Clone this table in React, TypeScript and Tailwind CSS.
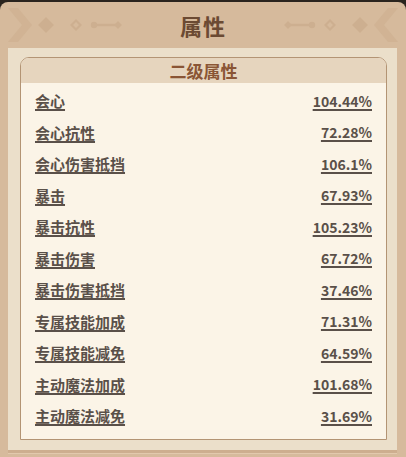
const rows: [string, string][] = [
  ['会心', '104.44%'],
  ['会心抗性', '72.28%'],
  ['会心伤害抵挡', '106.1%'],
  ['暴击', '67.93%'],
  ['暴击抗性', '105.23%'],
  ['暴击伤害', '67.72%'],
  ['暴击伤害抵挡', '37.46%'],
  ['专属技能加成', '71.31%'],
  ['专属技能减免', '64.59%'],
  ['主动魔法加成', '101.68%'],
  ['主动魔法减免', '31.69%'],
];

function Ornament({ flip = false }: { flip?: boolean }) {
  return (
    <svg
      width="124"
      height="46"
      viewBox="0 0 124 46"
      className={flip ? '-scale-x-100' : ''}
      fill="#cdaf90"
    >
      {/* big chevron */}
      <path d="M4 6 L14 6 L28 23 L14 40 L4 40 L18 23 Z" opacity="0.6" />
      {/* filled diamond */}
      <path d="M42 15 L50 23 L42 31 L34 23 Z" />
      {/* outlined diamond */}
      <path d="M72 17 L78 23 L72 29 L66 23 Z M72 20 L69 23 L72 26 L75 23 Z" fillRule="evenodd" />
      {/* line with knob */}
      <circle cx="90" cy="23" r="3.2" />
      <rect x="90" y="21.8" width="24" height="2.4" />
      <path d="M114 19 L118 23 L114 27 L110 23 Z" />
    </svg>
  );
}

export default function App() {
  return (
    <div
      className="w-[406px] h-[457px] bg-[#2a241e] overflow-hidden"
      style={{ fontFamily: '"Noto Sans CJK SC", "Noto Sans", sans-serif' }}
    >
      <div className="mt-[2px] h-[455px] rounded-t-[8px] bg-[#d6ba9c] flex flex-col">
        {/* title bar */}
        <div className="h-[46px] flex items-center justify-between px-[4px]">
          <Ornament />
          <span className="text-[22px] font-bold text-[#6b4a33] leading-none tracking-[1px] -mt-[1px]">属性</span>
          <Ornament flip />
        </div>

        {/* body */}
        <div className="ml-[8px] mr-[9px] bg-[#ebdfca] pt-[9px] pb-[10px] pl-[12px] pr-[10px] border-b-[3px] border-[#cdae8f] shadow-[0_1px_0_#e2c9ad]">
          <div className="rounded-t-[9px] border border-[#b39474] bg-[#fbf4e7] overflow-hidden">
            <div className="h-[25px] bg-[#e6d5be] flex items-center justify-center">
              <span className="text-[17px] font-bold text-[#8a5535] leading-none">二级属性</span>
            </div>
            <div className="pt-[2px] pb-[7px] pl-[14px] pr-[14px]">
              {rows.map(([label, value]) => (
                <div key={label} className="h-[31.5px] flex items-center justify-between">
                  <span className="text-[15px] font-bold text-[#5a5049] underline decoration-[1.5px] underline-offset-[2px] leading-none">
                    {label}
                  </span>
                  <span className="text-[14px] font-bold text-[#5a5049] underline decoration-[1.5px] underline-offset-[2px] leading-none">
                    {value}
                  </span>
                </div>
              ))}
            </div>
          </div>
        </div>
      </div>
    </div>
  );
}
